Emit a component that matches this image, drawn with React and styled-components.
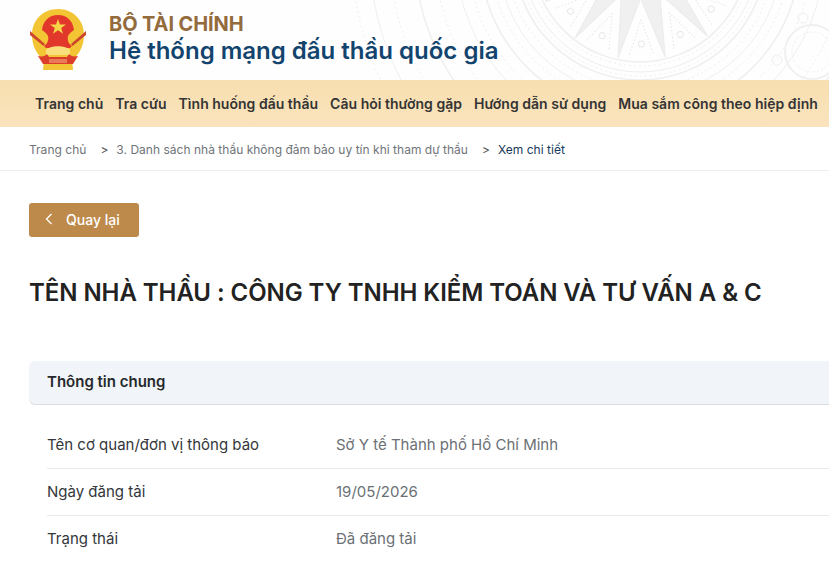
import React from "react";
import styled, { createGlobalStyle } from "styled-components";

const Global = createGlobalStyle`
  html, body { margin: 0; padding: 0; background: #fff; overflow: hidden; }
  body { font-family: Inter, "Noto Sans", sans-serif; width: 829px; height: 562px; }
`;
const Page = styled.div`width: 829px; height: 562px; overflow: hidden; background: #fff;`;
const Header = styled.header`
  position: relative; height: 80px; display: flex; align-items: center; gap: 22px;
  padding: 0 0 0 29px; overflow: hidden; background: #fefefe;
`;
const Drum = styled.svg`position: absolute; left: 0; top: 0; width: 829px; height: 80px; pointer-events: none;`;
const Emblem = styled.svg`position: relative; width: 58px; height: 62px; flex: none; margin-top: -1px;`;
const Brand = styled.div`position: relative; display: flex; flex-direction: column; margin-top: -4px;`;
const Ministry = styled.div`font-size: 20px; line-height: 26px; font-weight: 700; color: #936b3c; letter-spacing: -0.1px;`;
const Title = styled.h1`margin: 0; font-size: 24px; line-height: 28px; font-weight: 600; color: #12446e;`;
const Nav = styled.nav`
  height: 47px; display: flex; align-items: center; gap: 12px; padding-left: 35px; white-space: nowrap;
  background: linear-gradient(180deg, #f8dfb0, #fae3bd);
`;
const NavItem = styled.a`font-size: 14px; font-weight: 600; color: #343434; letter-spacing: 0.02px;`;
const Crumbs = styled.div`
  height: 44px; display: flex; align-items: center; padding: 1px 0 0 29px; box-sizing: border-box; font-size: 12px; color: #6f7479;
  border-bottom: 1px solid #ebedef; letter-spacing: 0.02px;
`;
const Sep = styled.span`margin: 0 8px 0 14px; color: #4c5156;`;
const Current = styled.span`color: #16395c;`;
const Main = styled.main`padding: 32px 0 0 29px;`;
const Back = styled.button`
  width: 110px; height: 34px; border: 0; border-radius: 3px; background: #bd8a4b; color: #fff;
  font: 500 14px Inter, sans-serif; display: flex; align-items: center; gap: 13px; padding: 0 0 2px 16px;
  svg { flex: none; }
`;
const Heading = styled.h2`margin: 41px 0 0; font-size: 24px; line-height: 30px; font-weight: 600; color: #222; white-space: nowrap; letter-spacing: -0.06px;`;
const Section = styled.div`
  margin-top: 53px; height: 41px; display: flex; align-items: center; padding: 0 0 2px 18px; border-radius: 6px 0 0 6px;
  background: #f1f4f8; border-bottom: 1px solid #d8dde2; font-size: 15px; font-weight: 600; color: #26292c;
`;
const Rows = styled.div`margin: 17px 0 0 18px;`;
const Row = styled.div`
  height: 47px; box-sizing: border-box; padding-bottom: 2px; display: flex; align-items: center; font-size: 15px; color: #33373a;
  border-bottom: 1px solid ${p => (p.$last ? "transparent" : "#e8eaec")};
`;
const Label = styled.div`width: 289px; flex: none;`;
const Value = styled.div`color: #6b7075;`;

function DrumArt() {
  const rays = Array.from({ length: 14 }, (_, i) => (i * 360) / 14 + 12);
  return (
    <Drum viewBox="0 0 829 80">
      <g transform="translate(640 -46)" fill="none" stroke="#efeff0">
        {[108, 112, 118, 122, 126, 134, 142, 150, 160, 172, 184, 205, 225, 250, 270, 288].map((r, i) => (
          <circle key={r} r={r} strokeWidth={i % 4 === 0 ? 1.5 : 1} strokeDasharray={i % 2 ? "2 3" : "none"} />
        ))}
        {rays.map(a => (
          <g key={a} transform={`rotate(${a})`}>
            <polygon points="-11,36 0,106 11,36" fill="#f0f0f1" stroke="#ebebec" />
            <g transform="rotate(12.860)">
              <circle cy="90" r="3" stroke="#e9e9ea" />
              <path d="M-12 100 0 66 12 100" strokeDasharray="1.500 2" stroke="#e6e6e7" />
            </g>
          </g>
        ))}
      </g>
      <g fill="none" stroke="#f0f0f1">
        <circle cx="812" cy="52" r="27" strokeWidth="2" />
        <circle cx="812" cy="52" r="20" strokeDasharray="2 2" />
        <circle cx="803" cy="18" r="5" />
        <circle cx="777" cy="60" r="5" />
      </g>
    </Drum>
  );
}

function EmblemArt() {
  return (
    <Emblem viewBox="0 0 58 62">
      <path d="M29 0C14 0 3 11 3 26c0 11 5 20 12 25l-1 10h30l-1-10c7-5 12-14 12-25C55 11 44 0 29 0Z" fill="#f3c535" />
      <path d="M29 6c-9 0-15 6-16 15 3 2 5 4 6 6h20c1-2 3-4 6-6C44 12 38 6 29 6Z" fill="#e2372b" />
      <path d="M19 27c1 5-1 8-4 10l2 2h24l2-2c-3-2-5-5-4-10Z" fill="#e2372b" />
      <path d="M29 10l2 5.600h6l-4.800 3.500 1.800 5.700-5-3.500-5 3.500 1.800-5.700-4.800-3.500h6Z" fill="#f7d748" />
      <path d="M1 22l15 13-1.500 2L1 26ZM57 22 42 35l1.500 2L57 26Z" fill="#cc452c" />
      <path d="M17 41c4-5 20-5 24 0v5H17Z" fill="#f9e07c" />
      <path d="M9 47c5 1 7 0 9-2l2 3h18l2-3c2 2 4 3 9 2l-5 8H14Z" fill="#dc3d2a" />
      <rect x="20" y="50" width="18" height="4" fill="#eb7a56" />
    </Emblem>
  );
}

const navItems = ["Trang chủ", "Tra cứu", "Tình huống đấu thầu", "Câu hỏi thường gặp", "Hướng dẫn sử dụng", "Mua sắm công theo hiệp định"];
const rows = [
  ["Tên cơ quan/đơn vị thông báo", "Sở Y tế Thành phố Hồ Chí Minh"],
  ["Ngày đăng tải", "19/05/2026"],
  ["Trạng thái", "Đã đăng tải"],
];

export default function App() {
  return (
    <Page>
      <Global />
      <Header>
        <DrumArt />
        <EmblemArt />
        <Brand>
          <Ministry>BỘ TÀI CHÍNH</Ministry>
          <Title>Hệ thống mạng đấu thầu quốc gia</Title>
        </Brand>
      </Header>
      <Nav>{navItems.map(n => <NavItem key={n}>{n}</NavItem>)}</Nav>
      <Crumbs>
        <span>Trang chủ</span>
        <Sep>&gt;</Sep>
        <span>3. Danh sách nhà thầu không đảm bảo uy tín khi tham dự thầu</span>
        <Sep>&gt;</Sep>
        <Current>Xem chi tiết</Current>
      </Crumbs>
      <Main>
        <Back>
          <svg width="8" height="12" viewBox="0 0 8 12" fill="none" stroke="#fff" strokeWidth="1.3">
            <path d="M6.500 1 1.500 6l5 5" />
          </svg>
          Quay lại
        </Back>
        <Heading>TÊN NHÀ THẦU : CÔNG TY TNHH KIỂM TOÁN VÀ TƯ VẤN A &amp; C</Heading>
        <Section>Thông tin chung</Section>
        <Rows>
          {rows.map(([l, v], i) => (
            <Row key={l} $last={i === rows.length - 1}>
              <Label>{l}</Label>
              <Value>{v}</Value>
            </Row>
          ))}
        </Rows>
      </Main>
    </Page>
  );
}
